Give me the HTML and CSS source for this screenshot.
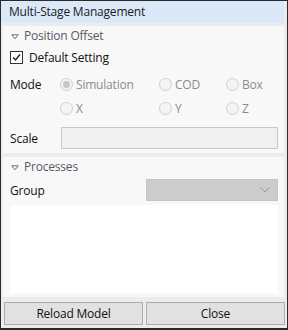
FILE: index.html
```html
<!DOCTYPE html>
<html>
<head>
<meta charset="utf-8">
<link rel="stylesheet" href="styles.css">
</head>
<body>
<div class="window">
  <div class="titlebar">Multi-Stage Management</div>
  <div class="panel panel-offset">
    <div class="section-head">
      <svg class="tri" width="8" height="6" viewBox="0 0 8 6"><path d="M0.8 0.8 L7.2 0.8 L4 4.8 Z" fill="#fff" stroke="#6a6a6a" stroke-width="1" stroke-linejoin="round"/></svg>
      Position Offset
    </div>
    <div class="check-row">
      <span class="checkbox">
        <svg width="9" height="9" viewBox="0 0 9 9"><path d="M1 4.5 L3.5 7 L8 1.5" fill="none" stroke="#222" stroke-width="1.4"/></svg>
      </span>
      <span class="check-label">Default Setting</span>
    </div>
    <div class="mode-grid">
      <span class="lbl">Mode</span>
      <span class="radio checked"><span class="dot"></span><span class="rtext">Simulation</span></span>
      <span class="radio"><span class="dot"></span><span class="rtext">COD</span></span>
      <span class="radio"><span class="dot"></span><span class="rtext">Box</span></span>
      <span></span>
      <span class="radio"><span class="dot"></span><span class="rtext">X</span></span>
      <span class="radio"><span class="dot"></span><span class="rtext">Y</span></span>
      <span class="radio"><span class="dot"></span><span class="rtext">Z</span></span>
    </div>
    <div class="scale-row">
      <span class="lbl">Scale</span>
      <span class="input"></span>
    </div>
  </div>
  <div class="panel panel-proc">
    <div class="section-head">
      <svg class="tri" width="8" height="6" viewBox="0 0 8 6"><path d="M0.8 0.8 L7.2 0.8 L4 4.8 Z" fill="#fff" stroke="#6a6a6a" stroke-width="1" stroke-linejoin="round"/></svg>
      Processes
    </div>
    <div class="group-row">
      <span class="lbl">Group</span>
      <span class="combo">
        <svg width="10" height="6" viewBox="0 0 10 6"><path d="M0.5 0.5 L5 5 L9.5 0.5" fill="none" stroke="#999" stroke-width="1"/></svg>
      </span>
    </div>
    <div class="list"></div>
  </div>
  <div class="buttons">
    <button class="btn">Reload Model</button>
    <button class="btn">Close</button>
  </div>
</div>
</body>
</html>
```

FILE: styles.css
```css
* { box-sizing: border-box; }
html, body { margin: 0; padding: 0; }
body {
  width: 288px;
  height: 330px;
  font-family: "Open Sans", "Noto Sans", sans-serif;
  font-size: 12px;
  color: #1e1e1e;
}
.window {
  width: 288px;
  height: 330px;
  border: 1px solid #2b2b2b;
  border-bottom-width: 2px;
  background: #ececec;
  display: flex;
  flex-direction: column;
}
.titlebar {
  height: 22px;
  line-height: 22px;
  padding-left: 8px;
  background: #dae8f7;
  margin-right: 3px;
  color: #1a1a2a;
  letter-spacing: -0.2px;
}
.panel {
  margin: 3px 3px 0 2px;
  background: #f8f8f8;
}
.panel-offset { height: 127px; }
.panel-proc {
  margin-top: 4px;
  height: 140px;
}
.section-head {
  height: 20px;
  line-height: 20px;
  padding-left: 8px;
  color: #555a66;
  display: flex;
  align-items: center;
  letter-spacing: -0.2px;
}
.tri {
  margin-right: 5px;
  margin-top: 1px;
}
.check-row {
  height: 22px;
  display: flex;
  align-items: center;
  padding-left: 7px;
}
.checkbox {
  width: 13px;
  height: 13px;
  border: 1px solid #333;
  background: #fff;
  display: flex;
  align-items: center;
  justify-content: center;
  margin-right: 6px;
}
.check-label { color: #111; letter-spacing: -0.2px; }
.mode-grid {
  margin-top: 4px;
  display: grid;
  grid-template-columns: 50px 99px 67px 1fr;
  grid-auto-rows: 24px;
  padding-left: 7px;
  align-items: center;
}
.lbl { color: #111; letter-spacing: -0.2px; }
.radio {
  display: flex;
  align-items: center;
  color: #8c8c8c;
}
.radio .dot {
  width: 13px;
  height: 13px;
  border: 1px solid #cfcfcf;
  border-radius: 50%;
  background: #f4f4f4;
  margin-right: 3px;
  display: flex;
  align-items: center;
  justify-content: center;
}
.radio.checked .dot::after {
  content: "";
  width: 7px;
  height: 7px;
  border-radius: 50%;
  background: #c6c6c6;
}
.rtext { letter-spacing: -0.2px; }
.scale-row {
  margin-top: 7px;
  height: 22px;
  display: flex;
  align-items: center;
  padding-left: 7px;
}
.scale-row .lbl { width: 51px; }
.input {
  width: 217px;
  height: 22px;
  border: 1px solid #c8c8c8;
  background: #f0f0f0;
}
.group-row {
  margin-top: 2px;
  height: 22px;
  display: flex;
  align-items: center;
  padding-left: 7px;
}
.group-row .lbl { width: 136px; }
.combo {
  width: 132px;
  height: 22px;
  background: #cccccc;
  border: 1px solid #c4c4c4;
  display: flex;
  align-items: center;
  justify-content: flex-end;
  padding-right: 7px;
}
.list {
  margin: 4px 6px 0 7px;
  height: 88px;
  background: #ffffff;
}
.buttons {
  margin-top: 5px;
  display: flex;
  gap: 3px;
  padding: 0 2px 0 3px;
}
.btn {
  flex: 1;
  height: 23px;
  border: 1px solid #adadad;
  background: #e1e1e1;
  font-family: "Open Sans", "Noto Sans", sans-serif;
  font-size: 12px;
  color: #111;
  padding: 0;
  letter-spacing: -0.2px;
}
```
